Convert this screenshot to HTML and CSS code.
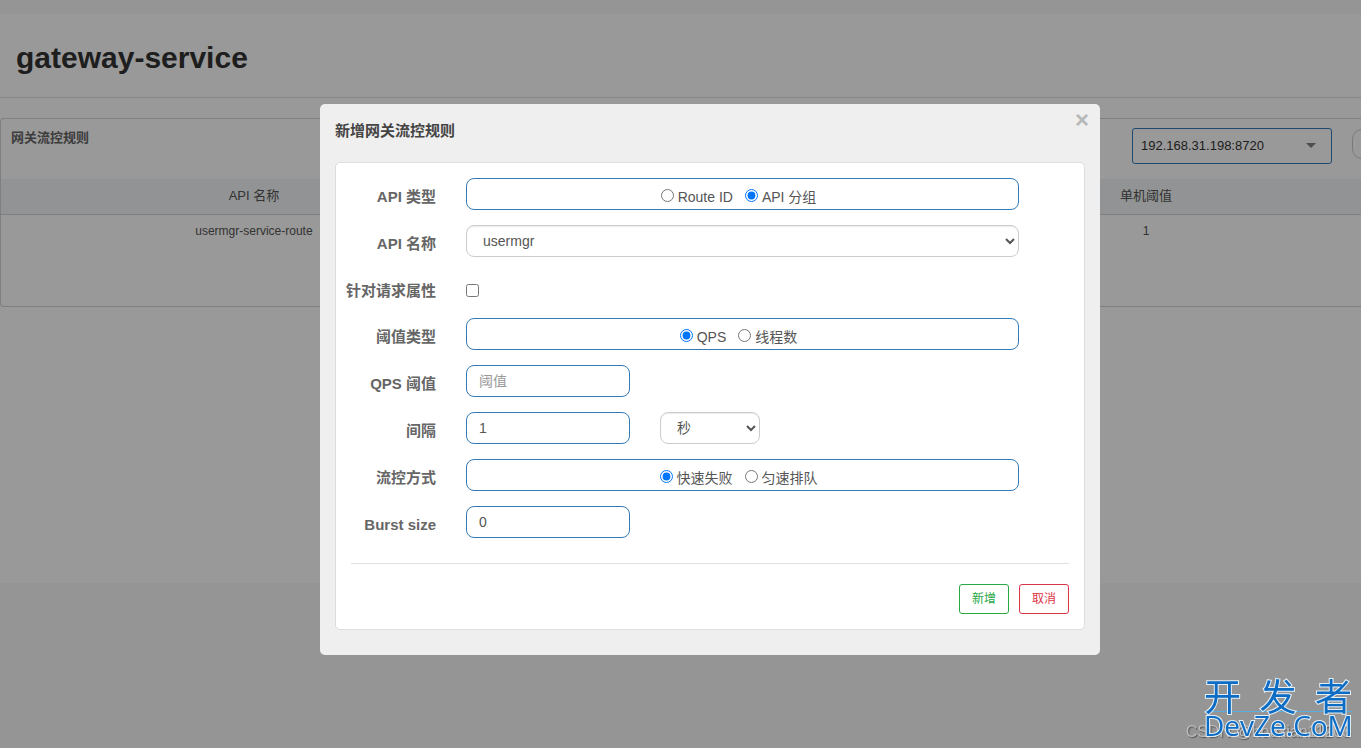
FILE: index.html
```html
<!DOCTYPE html>
<html lang="zh-CN">
<head>
<meta charset="utf-8">
<title>gateway-service</title>
<link rel="stylesheet" href="styles.css">
</head>
<body>
<main class="page">
  <header class="page-head"><h1 class="page-title">gateway-service</h1></header>
  <section class="panel">
    <div class="panel-head">
      <h2 class="panel-title">网关流控规则</h2>
      <div class="tools">
        <div class="machine">
          <select class="machine-select" aria-label="机器"><option>192.168.31.198:8720</option></select>
          <svg class="machine-arrow" width="10" height="5" viewBox="0 0 10 5"><path d="M0 0h10L5 5z" fill="#808080"/></svg>
        </div>
        <input class="search" type="text" aria-label="搜索">
      </div>
    </div>
    <table class="rules">
      <colgroup><col class="col-name"><col class="col-mid"><col class="col-value"><col></colgroup>
      <thead><tr><th>API 名称</th><th></th><th>单机阈值</th><th></th></tr></thead>
      <tbody><tr><td>usermgr-service-route</td><td></td><td>1</td><td></td></tr></tbody>
    </table>
  </section>
</main>

<div class="overlay">
  <div class="dialog" role="dialog" aria-labelledby="dialog-title">
    <button class="close" type="button" aria-label="关闭">×</button>
    <h2 class="dialog-title" id="dialog-title">新增网关流控规则</h2>
    <form class="card">
      <div class="fields">
        <span class="name" id="l-type">API 类型</span>
        <div class="radios" role="radiogroup" aria-labelledby="l-type">
          <label class="choice"><input type="radio" name="type">Route ID</label>
          <label class="choice"><input type="radio" name="type" checked>API 分组</label>
        </div>
        <label class="name" for="api">API 名称</label>
        <select class="control" id="api"><option>usermgr</option></select>
        <label class="name name-check" for="attr">针对请求属性</label>
        <div class="check-row"><input class="check" type="checkbox" id="attr"></div>
        <span class="name" id="l-grade">阈值类型</span>
        <div class="radios" role="radiogroup" aria-labelledby="l-grade">
          <label class="choice"><input type="radio" name="grade" checked>QPS</label>
          <label class="choice"><input type="radio" name="grade">线程数</label>
        </div>
        <label class="name" for="qps">QPS 阈值</label>
        <div class="inputs"><input class="control text" id="qps" type="text" placeholder="阈值"></div>
        <label class="name" for="interval">间隔</label>
        <div class="inputs">
          <input class="control text" id="interval" type="text" value="1">
          <select class="control unit" aria-label="单位"><option>秒</option></select>
        </div>
        <span class="name" id="l-mode">流控方式</span>
        <div class="radios" role="radiogroup" aria-labelledby="l-mode">
          <label class="choice"><input type="radio" name="mode" checked>快速失败</label>
          <label class="choice"><input type="radio" name="mode">匀速排队</label>
        </div>
        <label class="name" for="burst">Burst size</label>
        <div class="inputs"><input class="control text" id="burst" type="text" value="0"></div>
      </div>
      <div class="actions">
        <button class="btn btn-add" type="button">新增</button>
        <button class="btn btn-cancel" type="button">取消</button>
      </div>
    </form>
  </div>
</div>

<div class="author">CSDN @houxian11203</div>
<div class="brand"><span class="brand-cn"><span>开</span><span>发</span><span>者</span></span><span class="brand-en">DevZe.CoM</span></div>
</body>
</html>
```
FILE: styles.css
```css
* { box-sizing: border-box; }
body {
  margin: 0;
  padding-top: 14px;
  min-height: 100vh;
  background: #f8f8f8;
  color: #555;
  font: 14px/20px "Liberation Sans", "Noto Sans CJK SC", sans-serif;
  overflow: hidden;
}
h1, h2 { margin: 0; }
input, select, button { font: inherit; color: inherit; }

.page { min-height: 569px; background: #fff; }
.page-head { padding: 24px 16px 19px; border-bottom: 1px solid #e0e0e0; }
.page-title { font-size: 30px; line-height: 40px; color: #333; }
.panel {
  margin-top: 20px;
  min-height: 189px;
  border: 1px solid #d4d4d4;
  border-right: 0;
  border-radius: 4px 0 0 4px;
  overflow: hidden;
}
.panel-head { display: flex; justify-content: space-between; height: 60px; padding: 9px 0 0 10px; }
.panel-title { font-size: 13px; line-height: 20px; color: #666; }
.tools { display: flex; gap: 20px; margin-right: -191px; }
.machine { position: relative; width: 200px; height: 36px; }
.machine-select {
  appearance: none;
  width: 100%;
  height: 100%;
  padding: 0 8px;
  border: 1px solid #337ab7;
  border-radius: 3px;
  background: #fff;
  color: #333;
  font-size: 13px;
}
.machine-arrow { position: absolute; right: 16px; top: 15px; }
.search { width: 200px; height: 30px; margin-top: 1px; border: 1px solid #ccc; border-radius: 10px; background: #fff; }
.rules { width: 100%; table-layout: fixed; border-collapse: collapse; text-align: center; font-size: 12px; }
.rules th { height: 35px; padding: 0; background: #f3f5f7; border-bottom: 1px solid #d4d4d4; font-size: 13px; font-weight: normal; }
.rules td { height: 34px; padding: 0; }
.col-name { width: 37.2%; }
.col-mid { width: 36%; }
.col-value { width: 22%; }

.overlay {
  position: fixed;
  inset: 0;
  display: flex;
  justify-content: center;
  align-items: flex-start;
  padding: 104px 0 0 59px;
  background: rgba(0, 0, 0, .4);
}
.dialog { position: relative; width: 780px; padding: 15px 15px 25px; border-radius: 5px; background: #efefef; }
.dialog-title { margin-bottom: 19px; font-size: 15px; line-height: 24px; color: #444; }
.close {
  position: absolute;
  top: 6px;
  right: 11px;
  padding: 0;
  border: 0;
  background: none;
  color: #b8b8b8;
  font-size: 24px;
  font-weight: bold;
}
.card { border: 1px solid #ddd; border-radius: 5px; background: #fff; padding: 15px 15px 15px 0; }
.fields { display: grid; grid-template-columns: 100px 1fr; gap: 15px 30px; padding-right: 50px; }
.name { padding-top: 3px; font-size: 15px; line-height: 32px; font-weight: bold; color: #666; text-align: right; height: 32px; }
.name-check { height: 31px; }
.radios {
  display: flex;
  justify-content: center;
  gap: 12px;
  height: 32px;
  padding: 5px 8px 0 0;
  border: 1px solid #337ab7;
  border-radius: 8px;
}
.choice { display: flex; align-items: center; gap: 4px; line-height: 26px; }
.choice input { width: 13px; height: 13px; margin: 0 0 3px; }
.control {
  width: 100%;
  height: 32px;
  padding: 0 12px;
  border: 1px solid #ccc;
  border-radius: 8px;
  background: #fff;
  box-shadow: inset 0 1px 1px rgba(0, 0, 0, .08);
}
.inputs { display: flex; gap: 30px; }
.text { width: 164px; border-color: #337ab7; box-shadow: none; }
.text::placeholder { color: #999; }
.unit { width: 100px; }
.check-row { display: flex; align-items: center; padding-top: 6px; }
.check { width: 13px; height: 13px; margin: 0; }
.actions {
  display: flex;
  justify-content: flex-end;
  gap: 10px;
  margin: 25px 0 0 15px;
  padding-top: 20px;
  border-top: 1px solid #e0e0e0;
}
.btn { width: 50px; height: 30px; padding: 0; border: 1px solid; border-radius: 3px; background: #fff; font-size: 12px; }
.btn-add { color: #28a745; }
.btn-cancel { color: #dc3545; }

.author {
  position: fixed;
  right: 10px;
  bottom: 6px;
  color: #bbb;
  font-size: 16px;
  text-shadow: 1px 1px 1px #555;
}
.brand {
  position: fixed;
  right: 9px;
  bottom: 10px;
  width: 148px;
  color: #0d6dc4;
  font-family: "Open Sans", "Noto Sans CJK SC", sans-serif;
  -webkit-text-stroke: 2px #e4eef6;
  paint-order: stroke fill;
}
.brand-cn { display: flex; justify-content: space-between; font-size: 37px; line-height: 28px; border-bottom: 1px solid #58aee0; }
.brand-en { display: block; font-size: 28px; line-height: 26px; }
```
